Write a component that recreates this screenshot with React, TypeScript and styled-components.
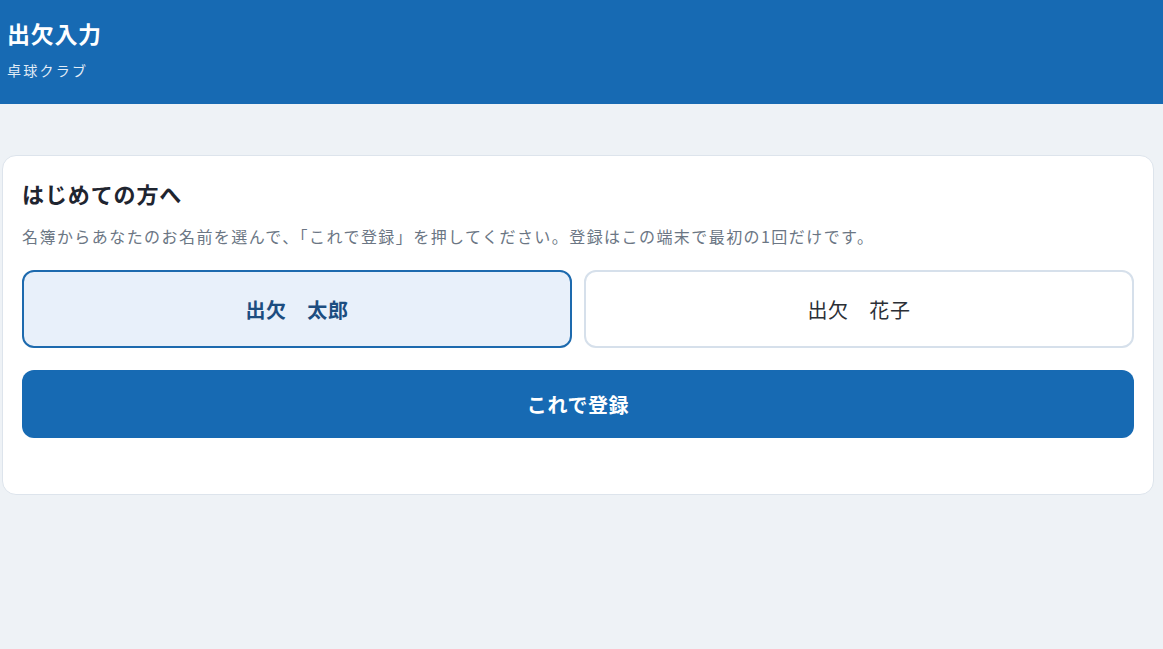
import React, { useState } from "react";
import styled, { createGlobalStyle } from "styled-components";

const GlobalStyle = createGlobalStyle`
    * {
        box-sizing: border-box;
    }
    body {
        margin: 0;
        background: #eef2f6;
        font-family: "Noto Sans CJK JP", "Noto Sans", sans-serif;
        color: #1f2937;
    }
`;

const Header = styled.header`
    background: #176ab3;
    color: #ffffff;
    padding: 16px 7px 22px;
`;

const Title = styled.h1`
    margin: 0;
    font-size: 23px;
    line-height: 34px;
    font-weight: 700;
    letter-spacing: 0.03em;
`;

const Subtitle = styled.p`
    margin: 8px 0 0;
    font-size: 14px;
    line-height: 24px;
    letter-spacing: 0.16em;
    color: #e3edf7;
`;

const Main = styled.main`
    padding: 51px 9px 0 2px;
`;

const Card = styled.section`
    background: #ffffff;
    border: 1px solid #dde4ec;
    border-radius: 14px;
    padding: 22px 19px 56px;
`;

const Heading = styled.h2`
    margin: 0;
    font-size: 22px;
    line-height: 31px;
    font-weight: 700;
    letter-spacing: 0.04em;
    color: #1f2530;
`;

const Description = styled.p`
    margin: 15px 0 22px;
    font-size: 16px;
    line-height: 24px;
    letter-spacing: 0.09em;
    color: #6b7684;
`;

const NameGrid = styled.div`
    display: grid;
    grid-template-columns: 1fr 1fr;
    gap: 12px;
`;

const NameButton = styled.button<{ $selected: boolean }>`
    height: 78px;
    border-radius: 12px;
    border: 2px solid ${(p) => (p.$selected ? "#1d6aae" : "#d6e0eb")};
    background: ${(p) => (p.$selected ? "#e8f0fa" : "#ffffff")};
    color: ${(p) => (p.$selected ? "#1c4d80" : "#2b2f36")};
    font-family: inherit;
    font-size: 20px;
    font-weight: ${(p) => (p.$selected ? 700 : 400)};
    letter-spacing: 0.03em;
    cursor: pointer;
`;

const SubmitButton = styled.button`
    display: block;
    width: 100%;
    height: 68px;
    margin-top: 22px;
    border: none;
    border-radius: 12px;
    background: #176ab3;
    color: #ffffff;
    font-family: inherit;
    font-size: 20px;
    font-weight: 700;
    letter-spacing: 0.03em;
    cursor: pointer;
`;

const members = ["出欠　太郎", "出欠　花子"];

const App: React.FC = () => {
    const [selected, setSelected] = useState(0);

    return (
        <>
            <GlobalStyle />
            <Header>
                <Title>出欠入力</Title>
                <Subtitle>卓球クラブ</Subtitle>
            </Header>
            <Main>
                <Card>
                    <Heading>はじめての方へ</Heading>
                    <Description>
                        名簿からあなたのお名前を選んで、「これで登録」を押してください。登録はこの端末で最初の1回だけです。
                    </Description>
                    <NameGrid>
                        {members.map((name, i) => (
                            <NameButton
                                key={name}
                                type="button"
                                $selected={selected === i}
                                onClick={() => setSelected(i)}
                            >
                                {name}
                            </NameButton>
                        ))}
                    </NameGrid>
                    <SubmitButton type="button">これで登録</SubmitButton>
                </Card>
            </Main>
        </>
    );
};

export default App;
